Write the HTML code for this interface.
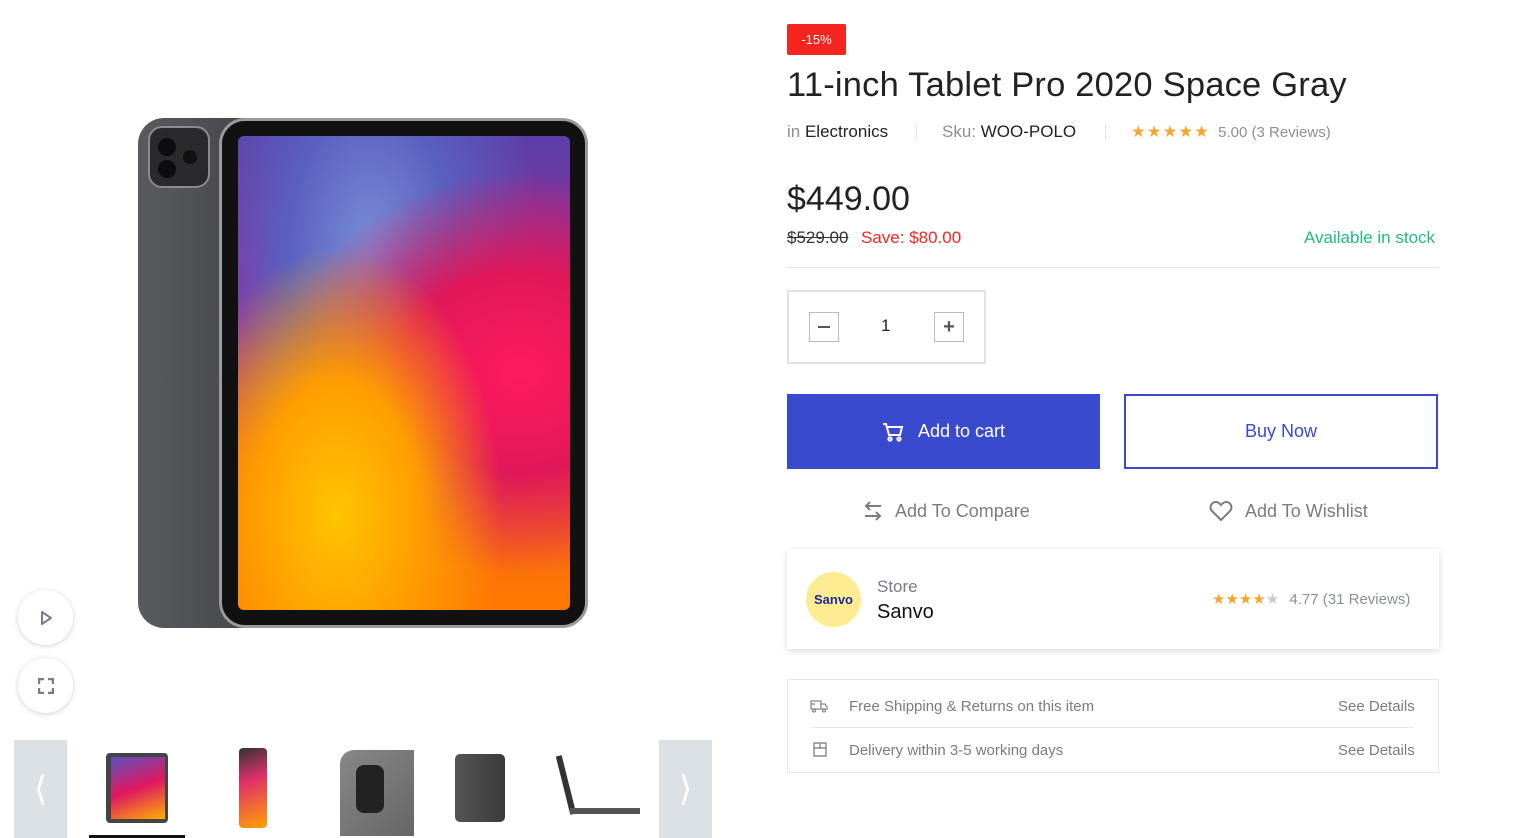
<!DOCTYPE html>
<html><head><meta charset="utf-8"><style>
*{margin:0;padding:0;box-sizing:border-box}
body{width:1533px;height:838px;overflow:hidden;background:#fff;font-family:"Liberation Sans",Arial,sans-serif;color:#222;position:relative}
.a{position:absolute}
.circ{position:absolute;left:18px;width:55px;height:55px;border-radius:50%;background:#fff;box-shadow:0 1px 6px rgba(0,0,0,.18);display:flex;align-items:center;justify-content:center}
.navb{position:absolute;top:740px;width:53px;height:98px;background:#dce1e5;color:#fff;font-size:34px;display:flex;align-items:center;justify-content:center}
.gray{color:#8a8f98}
</style></head><body>

<div class="a" style="left:138px;top:118px;width:420px;height:510px;border-radius:26px;background:linear-gradient(90deg,#5a5b5f,#3c3d40 40%,#2c2d30);"></div>
<div class="a" style="left:148px;top:126px;width:62px;height:62px;border-radius:14px;background:#2a2a2c;border:2px solid #8a8a8f"></div>
<div class="a" style="left:158px;top:138px;width:18px;height:18px;border-radius:50%;background:#0d0d10"></div>
<div class="a" style="left:158px;top:160px;width:18px;height:18px;border-radius:50%;background:#0d0d10"></div>
<div class="a" style="left:183px;top:150px;width:14px;height:14px;border-radius:50%;background:#111"></div>
<div class="a" style="left:219px;top:118px;width:369px;height:510px;border-radius:26px;background:#111;border:3px solid #9a9a9e"></div>
<div class="a" style="left:238px;top:136px;width:332px;height:474px;border-radius:6px;background:
radial-gradient(ellipse at 30% 80%,#ffc400 0,#ff9d00 25%,transparent 50%),
radial-gradient(ellipse at 85% 50%,#ff1a5e 0,#e0185a 30%,transparent 60%),
radial-gradient(ellipse at 40% 25%,#7a8fd8 0,#5a5fbf 30%,transparent 60%),
linear-gradient(180deg,#5b3fa8,#a02a9a 40%,#f06020 70%,#ff7a00);"></div>

<div class="circ" style="top:590px"><svg width="14" height="16" viewBox="0 0 14 16"><path d="M3 2 L12 8 L3 14 Z" fill="none" stroke="#777c85" stroke-width="2" stroke-linejoin="round"/></svg></div>
<div class="circ" style="top:658px"><svg width="16" height="16" viewBox="0 0 16 16" fill="none" stroke="#777c85" stroke-width="2.4"><path d="M1 6V1H6M10 1H15V6M15 10V15H10M6 15H1V10"/></svg></div>

<div class="navb" style="left:14px">&#10216;</div>
<div class="navb" style="left:659px">&#10217;</div>
<div class="a" style="left:106px;top:753px;width:62px;height:70px;border-radius:4px;background:#444"></div>
<div class="a" style="left:111px;top:757px;width:54px;height:62px;background:linear-gradient(160deg,#5a50c0,#e01860 50%,#ffb000)"></div>
<div class="a" style="left:239px;top:748px;width:28px;height:80px;border-radius:4px;background:linear-gradient(160deg,#333,#e0306a 40%,#ffa000)"></div>
<div class="a" style="left:340px;top:750px;width:74px;height:86px;border-radius:14px 0 0 0;background:linear-gradient(135deg,#888,#666)"></div>
<div class="a" style="left:356px;top:765px;width:28px;height:48px;border-radius:8px;background:#222"></div>
<div class="a" style="left:455px;top:754px;width:50px;height:68px;border-radius:5px;background:linear-gradient(90deg,#555,#3a3a3c)"></div>
<div class="a" style="left:563px;top:755px;width:6px;height:60px;background:#333;transform:rotate(-14deg)"></div>
<div class="a" style="left:570px;top:808px;width:70px;height:6px;background:#555"></div>
<div class="a" style="left:89px;top:835px;width:96px;height:3px;background:#111"></div>

<div class="a" style="left:787px;top:24px;width:59px;height:31px;background:#f6261f;border-radius:2px;color:#fff;font-size:13px;display:flex;align-items:center;justify-content:center">-15%</div>
<div class="a" style="left:787px;top:66px;font-size:34.5px;color:#222;white-space:nowrap;letter-spacing:0.2px">11-inch Tablet Pro 2020 Space Gray</div>
<div class="a" style="left:787px;top:122px;font-size:17px;white-space:nowrap"><span class="gray">in</span> Electronics</div>
<div class="a" style="left:916px;top:124px;width:1px;height:16px;background:#e5e5e5"></div>
<div class="a" style="left:942px;top:122px;font-size:17px;white-space:nowrap"><span class="gray">Sku:</span> WOO-POLO</div>
<div class="a" style="left:1105px;top:124px;width:1px;height:16px;background:#e5e5e5"></div>
<div class="a" style="left:1131px;top:122px;font-size:15px;white-space:nowrap"><span style="color:#f7a531;letter-spacing:1px;font-size:16.5px">★★★★★</span> <span class="gray" style="margin-left:4px">5.00 (3 Reviews)</span></div>

<div class="a" style="left:787px;top:180px;font-size:34px;color:#222">$449.00</div>
<div class="a" style="left:787px;top:228px;font-size:17px;text-decoration:line-through;color:#333">$529.00</div>
<div class="a" style="left:861px;top:228px;font-size:17px;color:#f6261f">Save: $80.00</div>
<div class="a" style="left:1304px;top:228px;font-size:17px;color:#21b97d">Available in stock</div>
<div class="a" style="left:787px;top:267px;width:652px;height:1px;background:#e8e8e8"></div>

<div class="a" style="left:787px;top:290px;width:199px;height:74px;border:2px solid #e2e2e2"></div>
<div class="a" style="left:809px;top:312px;width:30px;height:30px;border:1px solid #bbb;display:flex;align-items:center;justify-content:center"><div style="width:12px;height:2px;background:#555"></div></div>
<div class="a" style="left:881px;top:316px;font-size:17px">1</div>
<div class="a" style="left:934px;top:312px;width:30px;height:30px;border:1px solid #bbb;display:flex;align-items:center;justify-content:center;font-size:20px;color:#555;font-weight:bold">+</div>

<div class="a" style="left:787px;top:394px;width:313px;height:75px;background:#3a4acf;color:#fff;font-size:18px;display:flex;align-items:center;justify-content:center;gap:14px">
<svg width="22" height="20" viewBox="0 0 22 20" fill="none" stroke="#fff" stroke-width="2"><path d="M1 2H4L7 13H18L20 5H5"/><circle cx="8" cy="17" r="1.6"/><circle cx="17" cy="17" r="1.6"/></svg>Add to cart</div>
<div class="a" style="left:1124px;top:394px;width:314px;height:75px;border:2px solid #3a4acf;color:#3a4acf;font-size:18px;display:flex;align-items:center;justify-content:center">Buy Now</div>

<div class="a" style="left:863px;top:500px;font-size:18px;color:#777c85;display:flex;align-items:center;gap:12px;white-space:nowrap">
<svg width="20" height="22" viewBox="0 0 20 22" fill="none" stroke="#777c85" stroke-width="2"><path d="M18 6H3M7 2L3 6L7 10M2 16H17M13 12L17 16L13 20"/></svg>Add To Compare</div>
<div class="a" style="left:1209px;top:500px;font-size:18px;color:#777c85;display:flex;align-items:center;gap:12px;white-space:nowrap">
<svg width="24" height="22" viewBox="0 0 24 22" fill="none" stroke="#777c85" stroke-width="2"><path d="M12 20L3 11C0 8 2 2 7 2C9.5 2 11 4 12 5C13 4 14.5 2 17 2C22 2 24 8 21 11Z"/></svg>Add To Wishlist</div>

<div class="a" style="left:787px;top:549px;width:652px;height:100px;background:#fff;box-shadow:0 2px 6px rgba(0,0,0,.15)"></div>
<div class="a" style="left:806px;top:572px;width:55px;height:55px;border-radius:50%;background:#fdec91;color:#1a2a9a;font-weight:bold;font-size:13px;display:flex;align-items:center;justify-content:center">Sanvo</div>
<div class="a" style="left:877px;top:577px;font-size:17px;color:#777c85">Store</div>
<div class="a" style="left:877px;top:601px;font-size:20px;color:#111">Sanvo</div>
<div class="a" style="left:1212px;top:590px;font-size:15px;white-space:nowrap"><span style="color:#f7a531">★★★★</span><span style="color:#ccc">★</span> <span class="gray" style="font-size:15px;margin-left:6px">4.77 (31 Reviews)</span></div>

<div class="a" style="left:787px;top:679px;width:652px;height:94px;border:1px solid #e8e8e8"></div>
<div class="a" style="left:811px;top:727px;width:603px;height:1px;background:#e8e8e8"></div>
<svg class="a" style="left:810px;top:698px" width="18" height="16" viewBox="0 0 18 16" fill="none" stroke="#888" stroke-width="1.3"><path d="M1 3H11V11H1ZM11 6H15L17 9V11H11M1 6H5"/><circle cx="4" cy="12.5" r="1.5"/><circle cx="14" cy="12.5" r="1.5"/></svg>
<svg class="a" style="left:813px;top:741px" width="14" height="16" viewBox="0 0 14 16" fill="none" stroke="#888" stroke-width="1.4"><path d="M1 2H13V15H1ZM1 7H13M7 2V7"/></svg>
<div class="a" style="left:849px;top:698px;font-size:15px;color:#777c85">Free Shipping &amp; Returns on this item</div>
<div class="a" style="left:849px;top:742px;font-size:15px;color:#777c85">Delivery within 3-5 working days</div>
<div class="a" style="left:1338px;top:698px;font-size:15px;color:#777c85">See Details</div>
<div class="a" style="left:1338px;top:742px;font-size:15px;color:#777c85">See Details</div>
</body></html>
